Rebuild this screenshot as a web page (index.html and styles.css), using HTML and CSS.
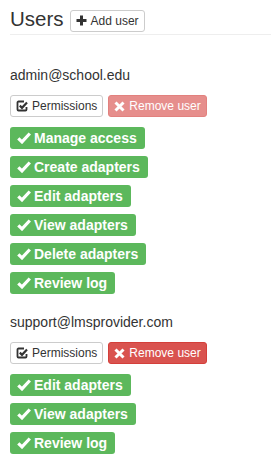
FILE: index.html
```html
<!DOCTYPE html>
<html lang="en">
<head>
  <meta charset="UTF-8" />
  <title>Users</title>
  <link rel="stylesheet" href="styles.css">
</head>
<body>
  <div class="page">
    <div class="header">
      <h2>Users</h2>
      <button class="btn btn-default">
        <svg class="icon" width="11" height="11" viewBox="0 0 11 11"><path d="M5.5 0.5v10M0.5 5.5h10" stroke="#333" stroke-width="3"/></svg>
        Add user
      </button>
    </div>

    <div class="user">
      <div class="email">admin@school.edu</div>
      <div class="actions">
        <button class="btn btn-default">
          <svg class="icon" width="12" height="12" viewBox="0 0 12 12"><path d="M8 1.5H2.5a1 1 0 0 0-1 1v7a1 1 0 0 0 1 1h7a1 1 0 0 0 1-1V7" fill="none" stroke="#333" stroke-width="1.8"/><path d="M3.8 5.6l2.2 2.2 5-5.3" fill="none" stroke="#333" stroke-width="2.2"/></svg>
          Permissions
        </button>
        <button class="btn btn-danger" disabled>
          <svg class="icon" width="11" height="11" viewBox="0 0 11 11"><path d="M1.5 1.5l8 8M9.5 1.5l-8 8" stroke="#fff" stroke-width="3"/></svg>
          Remove user
        </button>
      </div>
      <div class="perms">
        <span class="label"><svg class="tick" width="14" height="12" viewBox="0 0 14 12"><path d="M1.3 6.3l3.7 3.6 7.8-8.4" fill="none" stroke="#fff" stroke-width="3.2"/></svg>Manage access</span>
        <span class="label"><svg class="tick" width="14" height="12" viewBox="0 0 14 12"><path d="M1.3 6.3l3.7 3.6 7.8-8.4" fill="none" stroke="#fff" stroke-width="3.2"/></svg>Create adapters</span>
        <span class="label"><svg class="tick" width="14" height="12" viewBox="0 0 14 12"><path d="M1.3 6.3l3.7 3.6 7.8-8.4" fill="none" stroke="#fff" stroke-width="3.2"/></svg>Edit adapters</span>
        <span class="label"><svg class="tick" width="14" height="12" viewBox="0 0 14 12"><path d="M1.3 6.3l3.7 3.6 7.8-8.4" fill="none" stroke="#fff" stroke-width="3.2"/></svg>View adapters</span>
        <span class="label"><svg class="tick" width="14" height="12" viewBox="0 0 14 12"><path d="M1.3 6.3l3.7 3.6 7.8-8.4" fill="none" stroke="#fff" stroke-width="3.2"/></svg>Delete adapters</span>
        <span class="label"><svg class="tick" width="14" height="12" viewBox="0 0 14 12"><path d="M1.3 6.3l3.7 3.6 7.8-8.4" fill="none" stroke="#fff" stroke-width="3.2"/></svg>Review log</span>
      </div>
    </div>

    <div class="user">
      <div class="email">support@lmsprovider.com</div>
      <div class="actions">
        <button class="btn btn-default">
          <svg class="icon" width="12" height="12" viewBox="0 0 12 12"><path d="M8 1.5H2.5a1 1 0 0 0-1 1v7a1 1 0 0 0 1 1h7a1 1 0 0 0 1-1V7" fill="none" stroke="#333" stroke-width="1.8"/><path d="M3.8 5.6l2.2 2.2 5-5.3" fill="none" stroke="#333" stroke-width="2.2"/></svg>
          Permissions
        </button>
        <button class="btn btn-danger">
          <svg class="icon" width="11" height="11" viewBox="0 0 11 11"><path d="M1.5 1.5l8 8M9.5 1.5l-8 8" stroke="#fff" stroke-width="3"/></svg>
          Remove user
        </button>
      </div>
      <div class="perms">
        <span class="label"><svg class="tick" width="14" height="12" viewBox="0 0 14 12"><path d="M1.3 6.3l3.7 3.6 7.8-8.4" fill="none" stroke="#fff" stroke-width="3.2"/></svg>Edit adapters</span>
        <span class="label"><svg class="tick" width="14" height="12" viewBox="0 0 14 12"><path d="M1.3 6.3l3.7 3.6 7.8-8.4" fill="none" stroke="#fff" stroke-width="3.2"/></svg>View adapters</span>
        <span class="label"><svg class="tick" width="14" height="12" viewBox="0 0 14 12"><path d="M1.3 6.3l3.7 3.6 7.8-8.4" fill="none" stroke="#fff" stroke-width="3.2"/></svg>Review log</span>
      </div>
    </div>
  </div>
</body>
</html>
```

FILE: styles.css
```css
* {
  margin: 0;
  padding: 0;
  box-sizing: border-box;
}

body {
  background: #fff;
  color: #333;
  font-family: "Liberation Sans", Arial, sans-serif;
  font-size: 14px;
  line-height: 20px;
}

.page {
  padding: 0 7px 0 10px;
}

.header {
  display: flex;
  align-items: baseline;
  gap: 6px;
  height: 35px;
  padding-top: 7px;
  border-bottom: 1px solid #eee;
}

.header h2 {
  font-size: 20.5px;
  font-weight: normal;
  line-height: 23px;
}

.btn {
  display: inline-flex;
  align-items: center;
  gap: 4px;
  height: 22px;
  padding: 0 5px;
  font-family: inherit;
  font-size: 12px;
  line-height: 18px;
  border: 1px solid transparent;
  border-radius: 3px;
  cursor: pointer;
}

.btn .icon {
  flex: none;
}

.btn-default {
  background: #fff;
  color: #333;
  border-color: #ccc;
}

.btn-danger {
  background: #d9534f;
  color: #fff;
  border-color: #d43f3a;
}

.btn-danger:disabled {
  opacity: 0.65;
  cursor: not-allowed;
}

.user {
  margin-top: 30px;
}

.user + .user {
  margin-top: 18px;
}

.email {
  font-size: 14px;
  line-height: 20px;
}

.actions {
  display: flex;
  gap: 5px;
  margin-top: 10px;
}

.perms {
  display: flex;
  flex-direction: column;
  align-items: flex-start;
  gap: 7px;
  margin-top: 10px;
}

.label {
  display: inline-flex;
  align-items: center;
  gap: 3px;
  height: 22px;
  padding: 0 8px 1px 7px;
  background: #5cb85c;
  color: #fff;
  font-size: 14px;
  font-weight: bold;
  line-height: 16px;
  border-radius: 3px;
}

.label .tick {
  flex: none;
}
```
